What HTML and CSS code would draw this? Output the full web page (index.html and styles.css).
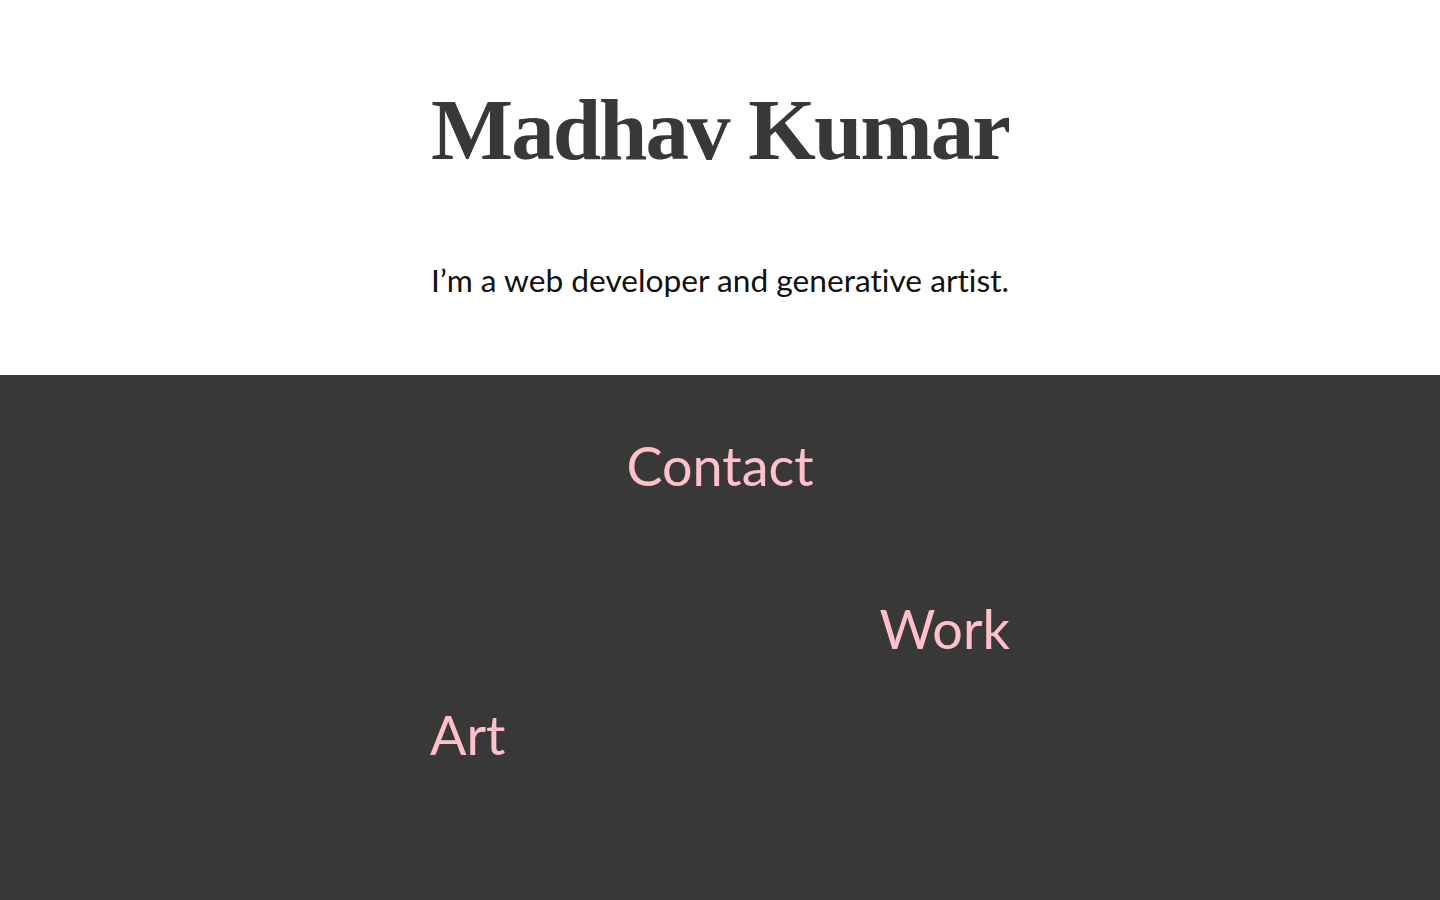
FILE: index.html
```html
<!DOCTYPE html>
<html lang="en">
<head>
<meta charset="utf-8">
<title>Madhav Kumar</title>
<link rel="stylesheet" href="styles.css">
</head>
<body>
<header class="intro">
  <div class="column">
    <h1 class="name">Madhav Kumar</h1>
    <p class="tagline">I’m a web developer and generative artist.</p>
  </div>
</header>
<main class="links">
  <nav class="column nav">
    <a class="link link-contact" href="#">Contact</a>
    <a class="link link-work" href="#">Work</a>
    <a class="link link-art" href="#">Art</a>
  </nav>
</main>
</body>
</html>
```

FILE: styles.css
```css
html, body {
  margin: 0;
  padding: 0;
}
body {
  background: #383838;
  font-family: Lato, "Open Sans", sans-serif;
  font-variant-ligatures: none;
}
.intro {
  background: #ffffff;
  height: 375px;
  box-sizing: border-box;
  padding-top: 75px;
}
.column {
  width: 580px;
  margin: 0 auto;
}
.name {
  margin: 0;
  text-align: center;
  white-space: nowrap;
  font-family: "Liberation Serif", serif;
  font-weight: 700;
  font-size: 87px;
  letter-spacing: -2px;
  line-height: 110px;
  color: #383838;
}
.tagline {
  margin: 75px 0 0;
  text-align: center;
  white-space: nowrap;
  font-size: 31.7px;
  line-height: 40px;
  color: #111111;
}
.links {
  min-height: 525px;
}
.nav {
  display: flex;
  flex-direction: column;
}
.link {
  color: #ffc0cb;
  text-decoration: none;
  font-size: 54px;
  line-height: 60px;
}
.link-contact {
  align-self: center;
  margin-top: 61px;
}
.link-work {
  align-self: flex-end;
  margin-top: 103px;
}
.link-art {
  align-self: flex-start;
  margin-top: 46px;
}
```
